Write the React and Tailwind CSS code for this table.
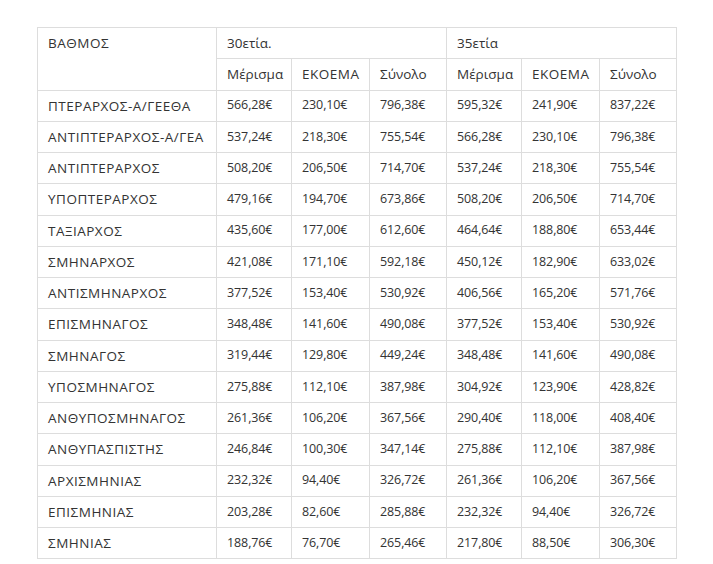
import React from "react";

const rows = [
  ["ΠΤΕΡΑΡΧΟΣ-Α/ΓΕΕΘΑ", "566,28€", "230,10€", "796,38€", "595,32€", "241,90€", "837,22€"],
  ["ΑΝΤΙΠΤΕΡΑΡΧΟΣ-Α/ΓΕΑ", "537,24€", "218,30€", "755,54€", "566,28€", "230,10€", "796,38€"],
  ["ΑΝΤΙΠΤΕΡΑΡΧΟΣ", "508,20€", "206,50€", "714,70€", "537,24€", "218,30€", "755,54€"],
  ["ΥΠΟΠΤΕΡΑΡΧΟΣ", "479,16€", "194,70€", "673,86€", "508,20€", "206,50€", "714,70€"],
  ["ΤΑΞΙΑΡΧΟΣ", "435,60€", "177,00€", "612,60€", "464,64€", "188,80€", "653,44€"],
  ["ΣΜΗΝΑΡΧΟΣ", "421,08€", "171,10€", "592,18€", "450,12€", "182,90€", "633,02€"],
  ["ΑΝΤΙΣΜΗΝΑΡΧΟΣ", "377,52€", "153,40€", "530,92€", "406,56€", "165,20€", "571,76€"],
  ["ΕΠΙΣΜΗΝΑΓΟΣ", "348,48€", "141,60€", "490,08€", "377,52€", "153,40€", "530,92€"],
  ["ΣΜΗΝΑΓΟΣ", "319,44€", "129,80€", "449,24€", "348,48€", "141,60€", "490,08€"],
  ["ΥΠΟΣΜΗΝΑΓΟΣ", "275,88€", "112,10€", "387,98€", "304,92€", "123,90€", "428,82€"],
  ["ΑΝΘΥΠΟΣΜΗΝΑΓΟΣ", "261,36€", "106,20€", "367,56€", "290,40€", "118,00€", "408,40€"],
  ["ΑΝΘΥΠΑΣΠΙΣΤΗΣ", "246,84€", "100,30€", "347,14€", "275,88€", "112,10€", "387,98€"],
  ["ΑΡΧΙΣΜΗΝΙΑΣ", "232,32€", "94,40€", "326,72€", "261,36€", "106,20€", "367,56€"],
  ["ΕΠΙΣΜΗΝΙΑΣ", "203,28€", "82,60€", "285,88€", "232,32€", "94,40€", "326,72€"],
  ["ΣΜΗΝΙΑΣ", "188,76€", "76,70€", "265,46€", "217,80€", "88,50€", "306,30€"],
];

const td = "border border-[#dddddd] pl-[10px] pr-[2px] align-middle whitespace-nowrap overflow-hidden";
const caps = `${td} text-[13.5px] tracking-[0.5px]`;
const lower = `${td} text-[13.5px]`;
const num = `${td} text-[12.5px] tracking-[-0.1px]`;

export default function App() {
  return (
    <div
      className="min-h-[564px] w-[713px] bg-white pl-[37px] pt-[27px] text-[#333333]"
      style={{ fontFamily: "'Open Sans', 'Noto Sans', sans-serif" }}
    >
      <table className="table-fixed border-collapse w-[639px]">
        <colgroup>
          <col className="w-[179px]" />
          <col className="w-[75px]" />
          <col className="w-[78px]" />
          <col className="w-[77px]" />
          <col className="w-[75px]" />
          <col className="w-[78px]" />
          <col className="w-[77px]" />
        </colgroup>
        <tbody>
          <tr className="h-[31.25px]">
            <td rowSpan={2} className={`${caps} !align-top pt-[5px]`}>ΒΑΘΜΟΣ</td>
            <td colSpan={3} className={lower}>30ετία.</td>
            <td colSpan={3} className={lower}>35ετία</td>
          </tr>
          <tr className="h-[31.25px]">
            <td className={lower}>Μέρισμα</td>
            <td className={caps}>ΕΚΟΕΜΑ</td>
            <td className={lower}>Σύνολο</td>
            <td className={lower}>Μέρισμα</td>
            <td className={caps}>ΕΚΟΕΜΑ</td>
            <td className={lower}>Σύνολο</td>
          </tr>
          {rows.map((r) => (
            <tr key={r[0]} className="h-[31.25px]">
              {r.map((c, i) => (
                <td key={i} className={i === 0 ? caps : num}>{c}</td>
              ))}
            </tr>
          ))}
        </tbody>
      </table>
    </div>
  );
}
